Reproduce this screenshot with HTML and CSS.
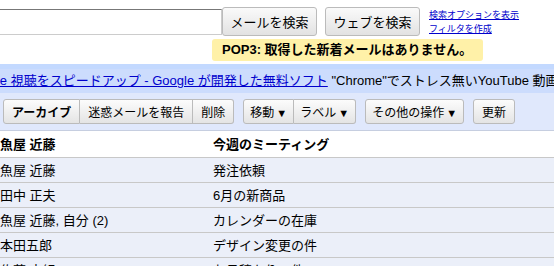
FILE: index.html
```html
<!DOCTYPE html>
<html lang="ja">
<head>
  <meta charset="UTF-8" />
  <title>受信トレイ</title>
  <link rel="stylesheet" href="styles.css">
</head>
<body>
  <div class="search-bar">
    <input type="text" class="search-input" />
    <button class="search-btn">メールを検索</button>
    <button class="search-btn web">ウェブを検索</button>
    <div class="search-links">
      <a href="#">検索オプションを表示</a>
      <a href="#">フィルタを作成</a>
    </div>
  </div>

  <div class="notice-row">
    <div class="notice">POP3: 取得した新着メールはありません。</div>
  </div>

  <div class="clip">
    <a href="#">YouTube 視聴をスピードアップ - Google が開発した無料ソフト</a> "Chrome"でストレス無いYouTube 動画再生
  </div>

  <div class="toolbar">
    <div class="group">
      <button class="tb-btn bold">アーカイブ</button>
      <button class="tb-btn">迷惑メールを報告</button>
      <button class="tb-btn">削除</button>
    </div>
    <div class="group">
      <button class="tb-btn menu">移動<span class="arrow">▼</span></button>
      <button class="tb-btn menu">ラベル<span class="arrow">▼</span></button>
    </div>
    <div class="group">
      <button class="tb-btn menu">その他の操作<span class="arrow">▼</span></button>
    </div>
    <div class="group">
      <button class="tb-btn">更新</button>
    </div>
  </div>

  <table class="mail-list">
    <tbody>
      <tr class="unread"><td class="from">魚屋 近藤</td><td>今週のミーティング</td></tr>
      <tr><td class="from">魚屋 近藤</td><td>発注依頼</td></tr>
      <tr><td class="from">田中 正夫</td><td>6月の新商品</td></tr>
      <tr><td class="from">魚屋 近藤, 自分 (2)</td><td>カレンダーの在庫</td></tr>
      <tr><td class="from">本田五郎</td><td>デザイン変更の件</td></tr>
      <tr><td class="from">佐藤 由紀</td><td>お見積もりの件</td></tr>
    </tbody>
  </table>
</body>
</html>
```

FILE: styles.css
```css
* { box-sizing: border-box; }
body {
  margin: 0;
  font-family: "Liberation Sans", "Noto Sans CJK JP", sans-serif;
  font-size: 13px;
  color: #000;
  background: #fff;
  overflow: hidden;
}

.search-bar { display: flex; align-items: flex-start; padding-top: 7px; height: 36px; }
.search-input {
  width: 224px; height: 26px; margin: 2px 0 0 -2px;
  border: 1px solid #ccc; border-top-color: #777;
}
.search-btn {
  height: 29px; width: 95px; padding: 0;
  font: inherit; font-size: 13px;
  background: linear-gradient(#fafafa, #e2e2e2);
  border: 1px solid #bbb; border-radius: 3px;
}
.search-btn.web { margin-left: 8px; }
.search-links {
  display: flex; flex-direction: column; margin-left: 9px; padding-top: 1px;
  font-size: 9px; line-height: 14px;
}
.search-links a { color: #00c; }

.notice-row { display: flex; padding: 3px 0 3px 212px; }
.notice {
  width: 271px; height: 22px; line-height: 22px; padding-left: 10px;
  background: #fff1a8; border-radius: 3px; font-weight: bold;
}

.clip {
  height: 29px; line-height: 23px;
  background: #ccdcfd; border-top: 5px solid #c3d9ff;
  white-space: nowrap; text-indent: -44px;
}
.clip a { color: #00c; }

.toolbar {
  display: flex; gap: 9px; height: 38px; padding: 6px 0 0 3px;
  background: #e0e8fc; border-bottom: 1px solid #c6cee0;
}
.group { display: flex; }
.tb-btn {
  height: 25px; padding: 0 8px; white-space: nowrap;
  font: inherit; font-size: 12px;
  background: linear-gradient(#fcfcfc, #e4e4e4);
  border: 1px solid #bbb; border-left-width: 0;
}
.tb-btn:first-child { border-left-width: 1px; border-radius: 3px 0 0 3px; }
.tb-btn:last-child { border-radius: 0 3px 3px 0; }
.tb-btn:only-child { border-radius: 3px; }
.tb-btn.bold { font-weight: bold; }
.tb-btn.menu { padding: 0 6px; }
.arrow { font-size: 11px; margin-left: 2px; }

.mail-list { width: 100%; border-collapse: collapse; }
.mail-list td {
  height: 25px; padding: 0; border-bottom: 1px solid #c8c8c8;
  background: #ebeff9; white-space: nowrap;
}
.mail-list .from { width: 213px; }
.mail-list .unread td { background: #fff; font-weight: bold; height: 26px; }
```
